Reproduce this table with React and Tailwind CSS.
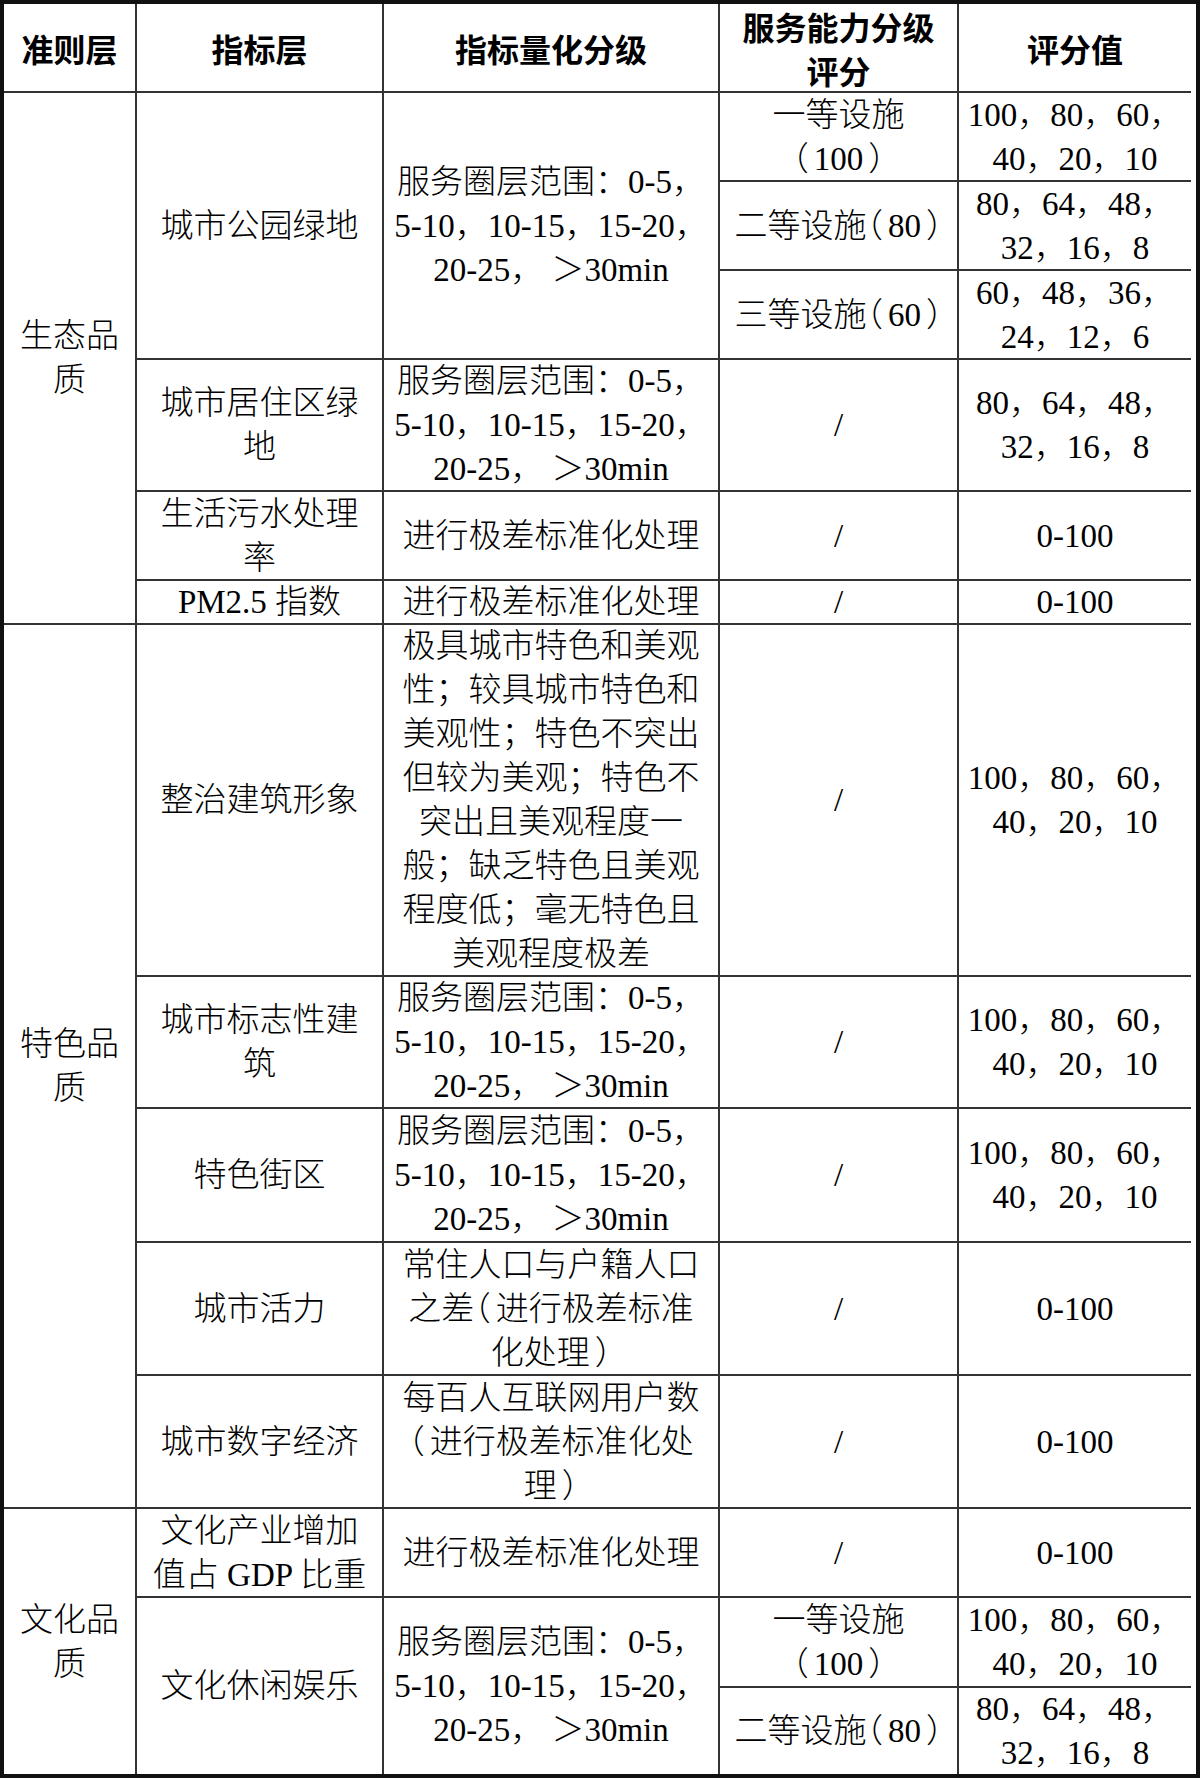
import React from "react";

function T({ text }) {
  // render fullwidth parentheses at half width (like the compressed punctuation in the reference)
  const parts = [];
  let buf = "";
  for (const ch of text) {
    if (ch === "（" || ch === "）") {
      if (buf) parts.push(buf);
      buf = "";
      parts.push({ p: ch });
    } else buf += ch;
  }
  if (buf) parts.push(buf);
  return (
    <>
      {parts.map((p, i) =>
        typeof p === "string" ? (
          <span key={i}>{p}</span>
        ) : (
          <span
            key={i}
            className={
              "[font-feature-settings:'halt'] " +
              (p.p === "（" ? "pr-[5px]" : "pl-[5px]")
            }
          >
            {p.p}
          </span>
        )
      )}
    </>
  );
}

function Cell({ className, lines, head }) {
  return (
    <div
      className={
        "flex flex-col items-center justify-center text-center whitespace-nowrap border-[#333] " +
        (head
          ? "font-['Noto_Sans_CJK_SC',sans-serif] font-bold text-[32px] leading-[44px] "
          : "font-['Liberation_Serif','Noto_Sans_CJK_SC',serif] font-light text-[33px] leading-[44px] ") +
        className
      }
    >
      {lines.map((l, i) => (
        <div key={i}>
          <T text={l} />
        </div>
      ))}
    </div>
  );
}

const SVC = ["服务圈层范围：0-5，", "5-10，10-15，15-20，", "20-25， ＞30min"];
const S100 = ["100，80，60，", "40，20，10"];
const S80 = ["80，64，48，", "32，16，8"];
const S60 = ["60，48，36，", "24，12，6"];

export default function App() {
  return (
    <div className="w-[1200px] bg-white text-black">
      <div className="w-[1200px] h-[1778px] border-4 border-[#111] grid grid-cols-[133px_247px_336px_239px_232px] grid-rows-[89px_89px_89px_89px_132px_89px_44px_352px_132px_134px_133px_133px_89px_90px_86px]">
        {/* header */}
        <Cell head className="row-start-1 col-start-1 border-r-2 border-b-2" lines={["准则层"]} />
        <Cell head className="row-start-1 col-start-2 border-r-2 border-b-2" lines={["指标层"]} />
        <Cell head className="row-start-1 col-start-3 border-r-2 border-b-2" lines={["指标量化分级"]} />
        <Cell head className="row-start-1 col-start-4 border-r-2 border-b-2" lines={["服务能力分级", "评分"]} />
        <Cell head className="row-start-1 col-start-5 border-b-2" lines={["评分值"]} />

        {/* 生态品质 */}
        <Cell className="row-start-2 row-span-6 col-start-1 border-r-2 border-b-2" lines={["生态品", "质"]} />
        <Cell className="row-start-2 row-span-3 col-start-2 border-r-2 border-b-2" lines={["城市公园绿地"]} />
        <Cell className="row-start-2 row-span-3 col-start-3 border-r-2 border-b-2" lines={SVC} />
        <Cell className="row-start-2 col-start-4 border-r-2 border-b-2" lines={["一等设施", "（100）"]} />
        <Cell className="row-start-2 col-start-5 border-b-2" lines={S100} />
        <Cell className="row-start-3 col-start-4 border-r-2 border-b-2" lines={["二等设施（80）"]} />
        <Cell className="row-start-3 col-start-5 border-b-2" lines={S80} />
        <Cell className="row-start-4 col-start-4 border-r-2 border-b-2" lines={["三等设施（60）"]} />
        <Cell className="row-start-4 col-start-5 border-b-2" lines={S60} />

        <Cell className="row-start-5 col-start-2 border-r-2 border-b-2" lines={["城市居住区绿", "地"]} />
        <Cell className="row-start-5 col-start-3 border-r-2 border-b-2" lines={SVC} />
        <Cell className="row-start-5 col-start-4 border-r-2 border-b-2" lines={["/"]} />
        <Cell className="row-start-5 col-start-5 border-b-2" lines={S80} />

        <Cell className="row-start-6 col-start-2 border-r-2 border-b-2" lines={["生活污水处理", "率"]} />
        <Cell className="row-start-6 col-start-3 border-r-2 border-b-2" lines={["进行极差标准化处理"]} />
        <Cell className="row-start-6 col-start-4 border-r-2 border-b-2" lines={["/"]} />
        <Cell className="row-start-6 col-start-5 border-b-2" lines={["0-100"]} />

        <Cell className="row-start-7 col-start-2 border-r-2 border-b-2" lines={["PM2.5 指数"]} />
        <Cell className="row-start-7 col-start-3 border-r-2 border-b-2" lines={["进行极差标准化处理"]} />
        <Cell className="row-start-7 col-start-4 border-r-2 border-b-2" lines={["/"]} />
        <Cell className="row-start-7 col-start-5 border-b-2" lines={["0-100"]} />

        {/* 特色品质 */}
        <Cell className="row-start-8 row-span-5 col-start-1 border-r-2 border-b-2" lines={["特色品", "质"]} />
        <Cell className="row-start-8 col-start-2 border-r-2 border-b-2" lines={["整治建筑形象"]} />
        <Cell
          className="row-start-8 col-start-3 border-r-2 border-b-2"
          lines={[
            "极具城市特色和美观",
            "性；较具城市特色和",
            "美观性；特色不突出",
            "但较为美观；特色不",
            "突出且美观程度一",
            "般；缺乏特色且美观",
            "程度低；毫无特色且",
            "美观程度极差",
          ]}
        />
        <Cell className="row-start-8 col-start-4 border-r-2 border-b-2" lines={["/"]} />
        <Cell className="row-start-8 col-start-5 border-b-2" lines={S100} />

        <Cell className="row-start-9 col-start-2 border-r-2 border-b-2" lines={["城市标志性建", "筑"]} />
        <Cell className="row-start-9 col-start-3 border-r-2 border-b-2" lines={SVC} />
        <Cell className="row-start-9 col-start-4 border-r-2 border-b-2" lines={["/"]} />
        <Cell className="row-start-9 col-start-5 border-b-2" lines={S100} />

        <Cell className="row-start-10 col-start-2 border-r-2 border-b-2" lines={["特色街区"]} />
        <Cell className="row-start-10 col-start-3 border-r-2 border-b-2" lines={SVC} />
        <Cell className="row-start-10 col-start-4 border-r-2 border-b-2" lines={["/"]} />
        <Cell className="row-start-10 col-start-5 border-b-2" lines={S100} />

        <Cell className="row-start-11 col-start-2 border-r-2 border-b-2" lines={["城市活力"]} />
        <Cell
          className="row-start-11 col-start-3 border-r-2 border-b-2"
          lines={["常住人口与户籍人口", "之差（进行极差标准", "化处理）"]}
        />
        <Cell className="row-start-11 col-start-4 border-r-2 border-b-2" lines={["/"]} />
        <Cell className="row-start-11 col-start-5 border-b-2" lines={["0-100"]} />

        <Cell className="row-start-12 col-start-2 border-r-2 border-b-2" lines={["城市数字经济"]} />
        <Cell
          className="row-start-12 col-start-3 border-r-2 border-b-2"
          lines={["每百人互联网用户数", "（进行极差标准化处", "理）"]}
        />
        <Cell className="row-start-12 col-start-4 border-r-2 border-b-2" lines={["/"]} />
        <Cell className="row-start-12 col-start-5 border-b-2" lines={["0-100"]} />

        {/* 文化品质 */}
        <Cell className="row-start-13 row-span-3 col-start-1 border-r-2" lines={["文化品", "质"]} />
        <Cell className="row-start-13 col-start-2 border-r-2 border-b-2" lines={["文化产业增加", "值占 GDP 比重"]} />
        <Cell className="row-start-13 col-start-3 border-r-2 border-b-2" lines={["进行极差标准化处理"]} />
        <Cell className="row-start-13 col-start-4 border-r-2 border-b-2" lines={["/"]} />
        <Cell className="row-start-13 col-start-5 border-b-2" lines={["0-100"]} />

        <Cell className="row-start-14 row-span-2 col-start-2 border-r-2" lines={["文化休闲娱乐"]} />
        <Cell className="row-start-14 row-span-2 col-start-3 border-r-2" lines={SVC} />
        <Cell className="row-start-14 col-start-4 border-r-2 border-b-2" lines={["一等设施", "（100）"]} />
        <Cell className="row-start-14 col-start-5 border-b-2" lines={S100} />
        <Cell className="row-start-15 col-start-4 border-r-2" lines={["二等设施（80）"]} />
        <Cell className="row-start-15 col-start-5" lines={S80} />
      </div>
    </div>
  );
}
